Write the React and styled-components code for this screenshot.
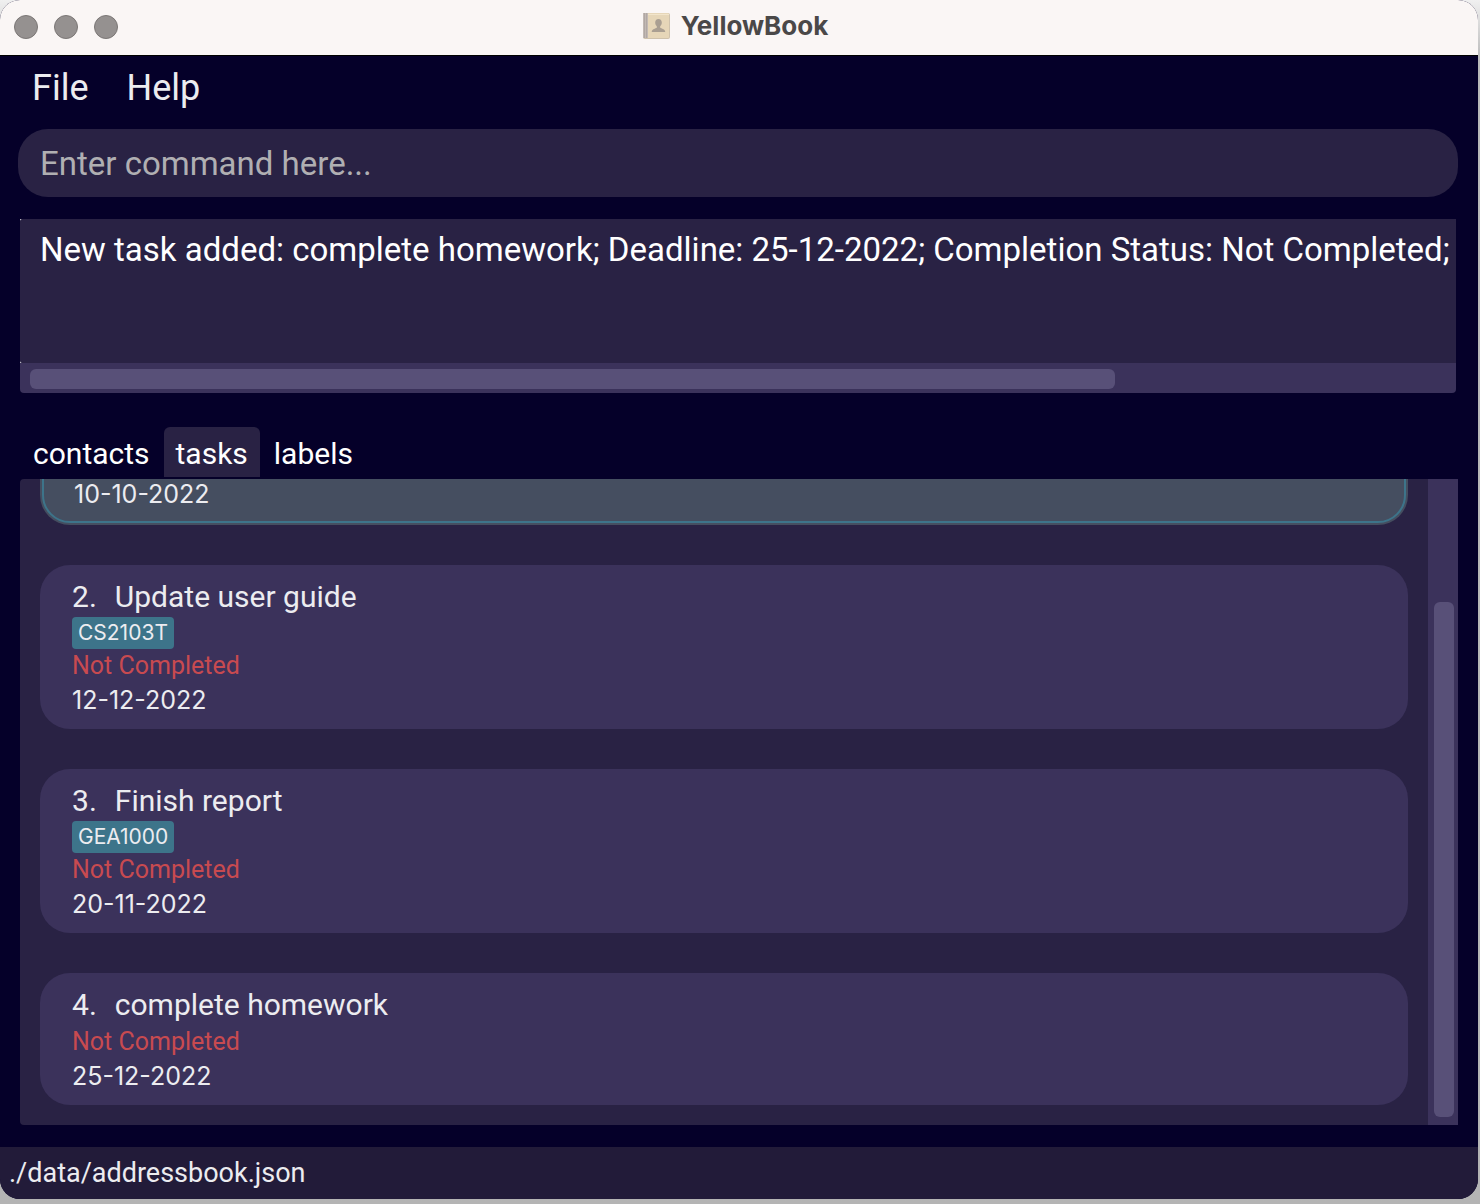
import React, { useState } from "react";
import styled, { createGlobalStyle } from "styled-components";

const c = {
  night: "#050029",
  panel: "#292244",
  card: "#3b325b",
  thumb: "#585078",
  teal: "#3d748a",
  active: "#454e60",
  red: "#c84a50",
  text: "#ececf0",
};

const inter = `Inter, "Liberation Sans", sans-serif`;

const GlobalStyle = createGlobalStyle`
  * { box-sizing: border-box; }
  html, body, #root { height: 100%; }
  body {
    margin: 0;
    background: linear-gradient(#f0f0f0 0, #b9b9b9 60px, #b4b4b4 100%);
    font-family: Roboto, "Liberation Sans", sans-serif;
    color: ${c.text};
  }
  button, input, textarea { font: inherit; color: inherit; border: 0; margin: 0; }
`;

const Window = styled.div`
  height: 100%;
  padding: 0 2px 5px 0;
`;

const Frame = styled.div`
  display: flex;
  flex-direction: column;
  height: 100%;
  overflow: hidden;
  border-radius: 20px;
  background: ${c.night};
`;

const TitleBar = styled.header`
  display: grid;
  grid-template-columns: 1fr auto 1fr;
  align-items: center;
  height: 56px;
  flex: none;
  padding: 0 22px 2px 14px;
  background: #faf6f5;
  border-bottom: 1px solid #000;
`;

const Lights = styled.div`
  display: flex;
  gap: 16px;
`;

const Light = styled.button`
  width: 24px;
  height: 24px;
  padding: 0;
  border: 1px solid #7b7776;
  border-radius: 50%;
  background: #959190;
`;

const Title = styled.h1`
  display: flex;
  align-items: center;
  gap: 10px;
  margin: 0;
  padding-bottom: 2px;
  font-family: ${inter};
  font-size: 26px;
  line-height: 30px;
  font-weight: 700;
  color: #4a4848;
`;

const Menu = styled.nav`
  display: flex;
  gap: 38px;
  flex: none;
  padding: 8px 32px 17px;
`;

const MenuButton = styled.button`
  padding: 0;
  background: none;
  font-size: 36px;
  line-height: 48px;
`;

const CommandBox = styled.input`
  height: 68px;
  flex: none;
  margin: 0 20px 0 18px;
  padding: 0 22px;
  border-radius: 30px;
  background: ${c.panel};
  font-size: 33px;
  outline: none;
  &::placeholder { color: #b0afb2; opacity: 1; }
`;

const Result = styled.section`
  display: flex;
  flex-direction: column;
  flex: none;
  margin: 22px 22px 34px 20px;
`;

const ResultBody = styled.div`
  display: flex;
  background: linear-gradient(90deg, #fff 4px, ${c.panel} 4px);
`;

const ResultText = styled.textarea`
  flex: 1;
  min-width: 0;
  height: 144px;
  padding: 10px 0 0 20px;
  border-radius: 2px 0 0 2px;
  background: ${c.panel};
  color: #fff;
  font-size: 33px;
  line-height: 42px;
  white-space: pre;
  overflow: hidden;
  resize: none;
  outline: none;
`;

const HorizontalTrack = styled.div`
  height: 30px;
  padding: 6px 10px 4px;
  border-radius: 0 0 4px 4px;
  background: ${c.card};
`;

const HorizontalThumb = styled.div`
  width: 76.6%;
  height: 20px;
  border-radius: 6px;
  background: ${c.thumb};
`;

const Tabs = styled.div`
  display: flex;
  gap: 2px;
  flex: none;
  padding: 0 21px 2px;
`;

const Tab = styled.button`
  height: 50px;
  padding: 4px 12px 0;
  border-radius: 6px 6px 0 0;
  background: ${(p) => (p.$selected ? c.panel : "transparent")};
  color: #fff;
  font-size: 30px;
  line-height: 40px;
`;

const ListPanel = styled.section`
  display: flex;
  flex: 1;
  min-height: 0;
  margin: 0 20px 22px;
  border-radius: 4px 0 0 4px;
  background: ${c.panel};
  overflow: hidden;
`;

const List = styled.ul`
  display: flex;
  flex: 1;
  flex-direction: column;
  justify-content: flex-end;
  gap: 40px;
  margin: 0;
  padding: 0 20px 20px;
  list-style: none;
`;

const Card = styled.li`
  flex: none;
  padding: 12px 32px;
  border-radius: 30px;
  background: ${(p) => (p.$selected ? c.active : c.card)};
  ${(p) =>
    p.$selected &&
    `
    padding: 48px 34px 14px;
    outline: 2px solid ${c.teal};
    outline-offset: -4px;
  `}
`;

const CardTitle = styled.h2`
  display: flex;
  gap: 18px;
  margin: 0;
  font-size: 30px;
  line-height: 40px;
  font-weight: 400;
`;

const Tag = styled.span`
  display: block;
  width: fit-content;
  padding: 0 6px;
  border-radius: 4px;
  background: ${c.teal};
  font-family: ${inter};
  font-size: 21px;
  line-height: 32px;
`;

const Status = styled.p`
  margin: 0;
  font-size: 25px;
  line-height: 34px;
  color: ${c.red};
`;

const Deadline = styled.p`
  margin: 0;
  font-family: ${inter};
  font-size: 25px;
  line-height: 34px;
`;

const VerticalTrack = styled.div`
  display: flex;
  flex-direction: column;
  justify-content: flex-end;
  width: 30px;
  padding: 8px 4px 8px 6px;
  background: ${c.card};
`;

const VerticalThumb = styled.div`
  height: 81.7%;
  border-radius: 6px;
  background: ${c.thumb};
`;

const StatusBar = styled.footer`
  flex: none;
  height: 52px;
  padding: 0 9px;
  background: #221b39;
  font-size: 27px;
  line-height: 52px;
`;

const selectedTask = { date: "10-10-2022" };

const tasks = [
  { id: 2, title: "Update user guide", tag: "CS2103T", date: "12-12-2022" },
  { id: 3, title: "Finish report", tag: "GEA1000", date: "20-11-2022" },
  { id: 4, title: "complete homework", date: "25-12-2022" },
];

function BookIcon() {
  return (
    <svg width="29" height="28" viewBox="0 0 29 28" aria-hidden="true">
      <rect x="1" y="1" width="27" height="26" rx="2" fill="#cfc2ac" />
      <rect x="1" y="1" width="26" height="25" rx="1" fill="#e6d6b8" />
      <rect x="1" y="1" width="5" height="25" fill="#c2b9b4" />
      <path d="M2.5 1v25M4.5 1v25" stroke="#b1a8a4" strokeWidth="1" />
      <rect x="6" y="2" width="21" height="1" fill="#f2e5cb" />
      <path
        d="M16.500 7c-2.200 0-3.300 1.500-3.300 3.600 0 1.600.7 2.900 1.600 3.700v1.400c-1.200 1-4.800.8-5.100 4.300h13.600c-.3-3.500-3.900-3.300-5.100-4.300v-1.400c.9-.8 1.600-2.100 1.600-3.700 0-2.100-1.100-3.600-3.300-3.600z"
        fill="#aa9f92"
      />
    </svg>
  );
}

export default function App() {
  const [tab, setTab] = useState("tasks");
  return (
    <Window>
      <GlobalStyle />
      <Frame>
        <TitleBar>
          <Lights>
            {["Close", "Minimise", "Zoom"].map((name) => (
              <Light key={name} aria-label={name} />
            ))}
          </Lights>
          <Title>
            <BookIcon />
            YellowBook
          </Title>
        </TitleBar>
        <Menu>
          <MenuButton>File</MenuButton>
          <MenuButton>Help</MenuButton>
        </Menu>
        <CommandBox aria-label="Command" placeholder="Enter command here..." />
        <Result>
          <ResultBody>
            <ResultText
              aria-label="Result"
              readOnly
              wrap="off"
              value="New task added: complete homework; Deadline: 25-12-2022; Completion Status: Not Completed;"
            />
          </ResultBody>
          <HorizontalTrack>
            <HorizontalThumb />
          </HorizontalTrack>
        </Result>
        <Tabs role="tablist">
          {["contacts", "tasks", "labels"].map((name) => (
            <Tab
              key={name}
              role="tab"
              aria-selected={tab === name}
              $selected={tab === name}
              onClick={() => setTab(name)}
            >
              {name}
            </Tab>
          ))}
        </Tabs>
        <ListPanel>
          <List>
            <Card $selected>
              <Deadline>{selectedTask.date}</Deadline>
            </Card>
            {tasks.map((t) => (
              <Card key={t.id}>
                <CardTitle>
                  <span>{t.id}.</span>
                  <span>{t.title}</span>
                </CardTitle>
                {t.tag && <Tag>{t.tag}</Tag>}
                <Status>Not Completed</Status>
                <Deadline>{t.date}</Deadline>
              </Card>
            ))}
          </List>
          <VerticalTrack>
            <VerticalThumb />
          </VerticalTrack>
        </ListPanel>
        <StatusBar>./data/addressbook.json</StatusBar>
      </Frame>
    </Window>
  );
}
